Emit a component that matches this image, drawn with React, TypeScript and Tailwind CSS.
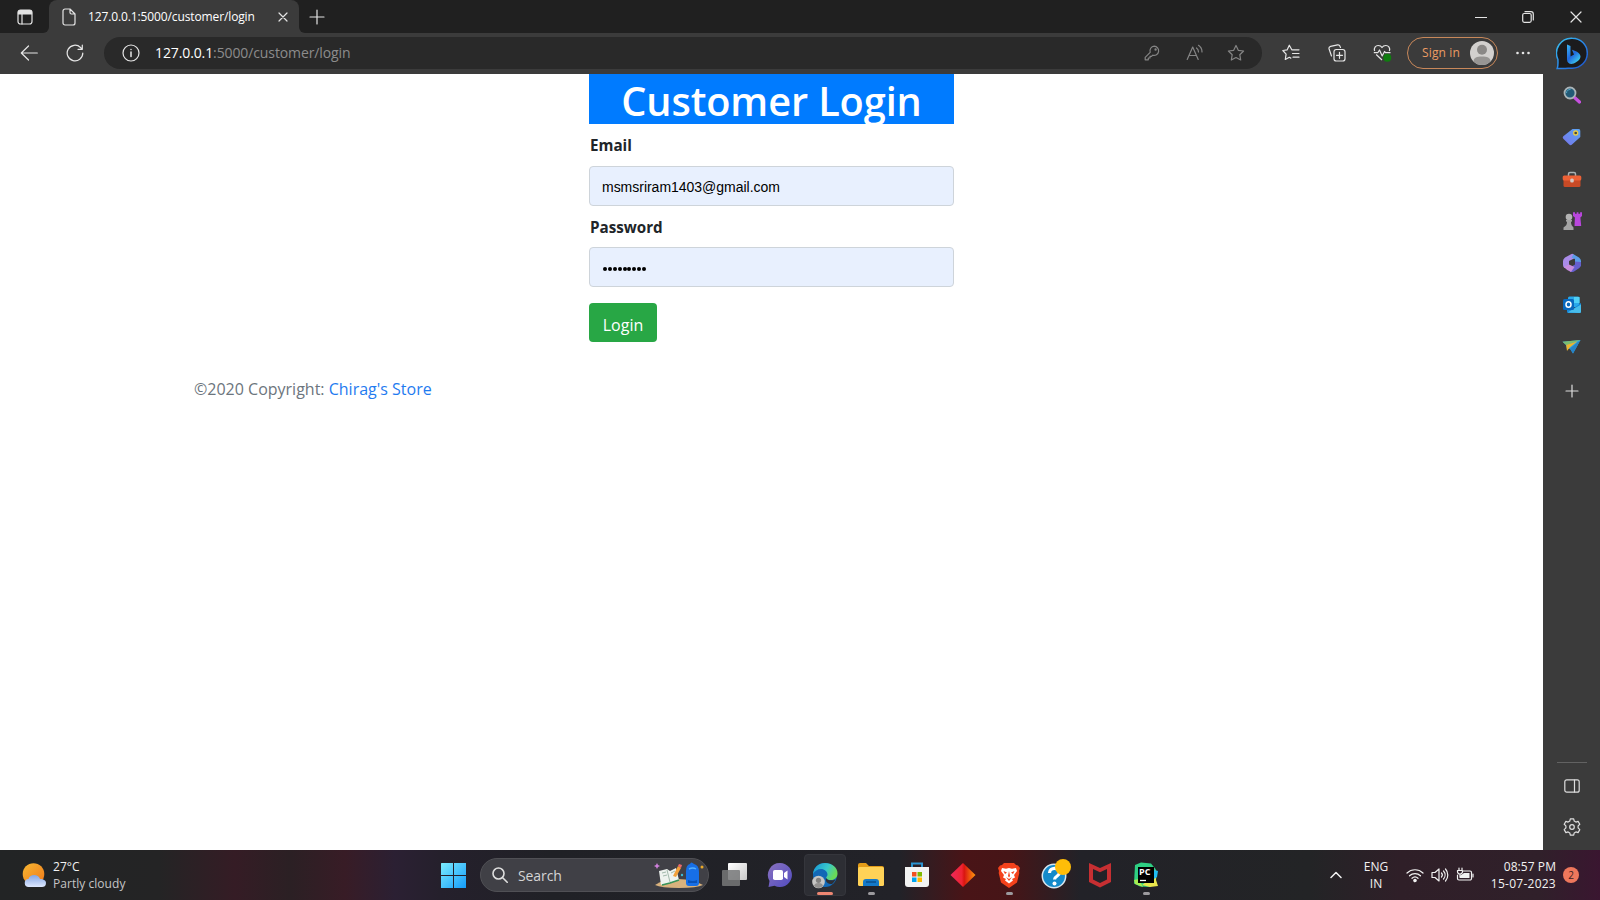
import type { ReactNode } from "react";

type IconProps = { w?: number; h?: number; box: string; className?: string; children: ReactNode };

function Icon({ w = 18, h = 18, box, className = "", children }: IconProps) {
  return (
    <svg width={w} height={h} viewBox={box} fill="none" stroke="currentColor" strokeWidth="1.2" strokeLinecap="round" strokeLinejoin="round" className={`block shrink-0 ${className}`}>
      {children}
    </svg>
  );
}

const STAR = "M9 1.5 11.3 6.3 16.6 7 12.8 10.7 13.7 16 9 13.5 4.3 16 5.2 10.7 1.4 7 6.7 6.3Z";

function TabStrip() {
  return (
    <div className="flex h-[33px] items-stretch bg-[#3b3b3b] text-[#e4e4e4]">
      <div className="flex w-[49px] items-center justify-center rounded-br-md bg-[#202020]">
        <Icon w={16} h={16} box="0 0 16 16">
          <rect x="1" y="1" width="14" height="14" rx="2.5" />
          <path d="M1.5 3.5a2 2 0 0 1 2-2h9a2 2 0 0 1 2 2V5h-13Z" fill="currentColor" />
          <path d="M5 5v10" />
        </Icon>
      </div>
      <div className="w-[250px] bg-[#202020]">
        <div className="flex h-full items-center rounded-t-lg bg-[#3b3b3b] pl-[13px] pr-[11px]">
          <Icon w={14} h={18} box="0 0 14 18">
            <path d="M1 3a2 2 0 0 1 2-2h5l5 5v9a2 2 0 0 1-2 2H3a2 2 0 0 1-2-2ZM8 1v3.500a1.500 1.500 0 0 0 1.500 1.500H13" />
          </Icon>
          <span className="ml-[12px] grow whitespace-nowrap text-[12px] leading-4 tracking-[-0.12px] text-white">127.0.0.1:5000/customer/login</span>
          <Icon w={10} h={10} box="0 0 10 10"><path d="M1 1l8 8M9 1 1 9" /></Icon>
        </div>
      </div>
      <div className="flex grow items-center rounded-bl-md bg-[#202020] pl-[10px] pr-[18px]">
        <Icon w={16} h={16} box="0 0 16 16"><path d="M8 1v14M1 8h14" /></Icon>
        <Icon w={12} h={12} box="0 0 12 12" className="ml-auto mr-[35px]"><path d="M.5 6.500h11" /></Icon>
        <Icon w={12} h={12} box="0 0 12 12" className="mr-[36px]">
          <rect x=".7" y="2.500" width="8.500" height="8.800" rx="1.500" />
          <path d="M3 .7h6a2.300 2.300 0 0 1 2.300 2.300v6" />
        </Icon>
        <Icon w={12} h={12} box="0 0 12 12"><path d="m1 1 10 10M11 1 1 11" /></Icon>
      </div>
    </div>
  );
}

function Toolbar() {
  return (
    <div className="flex h-[41px] items-center bg-[#3b3b3b] pb-px text-[#e6e6e6]">
      <Icon w={18} h={18} box="0 0 18 18" className="ml-[20px]"><path d="M17.300 9H1.500M8.500 2 1.300 9l7.200 7" /></Icon>
      <Icon w={18} h={18} box="0 0 18 18" className="ml-[28px]">
        <path d="M16.800 9a7.800 7.800 0 1 1-2.300-5.500L16.300 5.300M16.300 1v4.300H12" />
      </Icon>
      <div className="ml-[20px] flex h-[32px] w-[1158px] items-center rounded-full bg-[#292929] pl-[18px] pr-[17px]">
        <Icon w={18} h={18} box="0 0 18 18">
          <circle cx="9" cy="9" r="8" /><path d="M9 8v4.500M9 5.400v.2" strokeWidth="1.500" />
        </Icon>
        <span className="ml-[15px] whitespace-nowrap text-[14px] leading-5 tracking-[-0.11px] text-[#8c8c8c]"><span className="text-white">127.0.0.1</span>:5000/customer/login</span>
        <div className="ml-auto flex items-center text-[#858585]">
          <Icon w={16} h={16} box="0 0 16 16">
            <path d="M10.200 1.200a4.600 4.600 0 1 1-1.500 9L7.500 11.400H6V13H4.300v1.800H1.200v-2.500l5-5a4.600 4.600 0 0 1 4-6.100Z" /><circle cx="11.600" cy="4.500" r=".6" />
          </Icon>
          <Icon w={18} h={18} box="0 0 18 18" className="ml-[26px]">
            <path d="M1.200 15.500 6.700 3l5.500 12.500M3 11.500h7.500M10.500 4a5 5 0 0 1 2 4M12.500 1.300A8 8 0 0 1 16 8" />
          </Icon>
          <Icon w={18} h={18} box="0 0 18 18" className="ml-[23px]"><path d={STAR} /></Icon>
        </div>
      </div>
      <Icon w={18} h={18} box="0 0 18 18" className="ml-[20px]">
        <path d="M11 5.800H9.800L7.300 1.200 5.200 5.800.8 6.500l3.300 3.700-.8 5.300 4-2.200M11 5.800h6M10.500 9.500H17M11 13.200h6M7.300 13.300l1.500.8" />
      </Icon>
      <Icon w={18} h={18} box="0 0 18 18" className="ml-[28px]">
        <path d="M3.500 12 1.100 5a2.200 2.200 0 0 1 1.500-2.700L9.500.9A2.200 2.200 0 0 1 12 2.300l.5 1.200" />
        <rect x="6" y="5.500" width="11" height="11.500" rx="2.300" /><path d="M11.500 8.300v6M8.500 11.300h6" />
      </Icon>
      <svg width="19" height="18" viewBox="0 0 19 18" fill="none" stroke="currentColor" strokeWidth="1.200" strokeLinejoin="round" className="ml-[27px] block shrink-0">
        <path d="M1.600 7C.6 4 2.600 1.500 5.200 1.500c2 0 3.300 1 3.800 2 .6-1 2-2 3.800-2 2.800 0 4.600 2.700 3.600 5.500M3.200 10.500 9 16M.8 8.700h4L6.500 6l2.700 6 2.300-4.500 1 1.200h5" />
        <circle cx="14.300" cy="13.700" r="4" fill="#107c10" stroke="none" />
      </svg>
      <div className="ml-[15px] flex h-[32px] w-[91px] items-center justify-between rounded-full border-[1.500px] border-[#c8885a] pl-[14px] pr-[3px]">
        <span className="whitespace-nowrap text-[12px] leading-4 tracking-[0.15px] text-[#eb9c63]">Sign in</span>
        <svg width="24" height="24" viewBox="0 0 24 24" className="shrink-0">
          <circle cx="12" cy="12" r="12" fill="#d2d0ce" /><circle cx="12" cy="8.700" r="5" fill="#8a8886" />
          <path d="M3.500 20.400C3.500 16.500 7 15.500 12 15.500s8.500 1 8.500 4.900A12 12 0 0 1 3.500 20.400Z" fill="#979593" />
        </svg>
      </div>
      <Icon w={16} h={4} box="0 0 16 4" className="ml-[17px]">
        <g fill="currentColor" stroke="none"><circle cx="2.500" cy="2" r="1.300" /><circle cx="8" cy="2" r="1.300" /><circle cx="13.500" cy="2" r="1.300" /></g>
      </Icon>
      <svg width="32" height="33" viewBox="0 0 32 33" className="ml-[25px] block shrink-0">
        <defs>
          <linearGradient id="ring" x1="0" y1="0" x2="1" y2="1"><stop stopColor="#3bc4ee" /><stop offset=".55" stopColor="#2883e8" /><stop offset="1" stopColor="#1d4fc4" /></linearGradient>
          <linearGradient id="bing" x1="0" y1="0" x2=".7" y2="1"><stop stopColor="#39b9f5" /><stop offset=".55" stopColor="#2167df" /><stop offset="1" stopColor="#3fd0ee" /></linearGradient>
        </defs>
        <path d="M16.300 1.200a15 15 0 1 1 0 30c-3 0-5 .3-7 .3H1.200c1-2 .9-5 .7-9A15 15 0 0 1 16.300 1.200Z" fill="#1b1b1d" stroke="url(#ring)" strokeWidth="1.500" />
        <path d="M11 7.500 14.500 9v10.500L18 17.400l-2-4.600c3 1 8.500 3 8.500 6.700 0 4.200-7 7.500-9 7.500-2.500 0-4.500-1.700-4.500-4.500Z" fill="url(#bing)" />
      </svg>
    </div>
  );
}

function LoginPage() {
  return (
    <main className="grow bg-white">
      <form className="ml-[589px] w-[365px]" onSubmit={(e) => e.preventDefault()}>
        <h1 className="flex h-[50px] items-center justify-center whitespace-nowrap bg-[#007bff] pt-[3px] text-[39.700px] font-semibold leading-[48px] tracking-[-0.1px] text-white">Customer Login</h1>
        <label className="mt-[9px] block h-[25px] pl-px text-[15.200px] font-bold leading-[24px] text-[#212529]">Email</label>
        <div className="mt-[8px] flex h-[40px] items-center rounded border border-[#ced4da] bg-[#e8f0fe] pl-[12px] pt-[3px] font-['Liberation_Sans',sans-serif] text-[14px] tracking-[-0.02px] text-black">msmsriram1403@gmail.com</div>
        <label className="mt-[9px] block h-[25px] pl-px text-[15.200px] font-bold leading-[24px] text-[#212529]">Password</label>
        <div className="mt-[7px] flex h-[40px] items-center gap-[0.900px] rounded border border-[#ced4da] bg-[#e8f0fe] pl-[13px] pt-[3px]">
          {Array.from({ length: 9 }, (_, i) => (
            <span key={i} className="size-[4px] rounded-full bg-black" />
          ))}
        </div>
        <button type="submit" className="mt-[16px] flex h-[39px] w-[68px] items-center justify-center rounded bg-[#28a745] pt-[4px] text-[16px] text-white">Login</button>
      </form>
      <footer className="mt-[35px] whitespace-nowrap pl-[194px] text-[16px] leading-[24px] text-[#6c757d]">©2020 Copyright: <a href="#store" className="text-[#1f7bf0]">Chirag's Store</a></footer>
    </main>
  );
}

function Sidebar() {
  const cell = "flex h-[42px] items-center justify-center";
  return (
    <aside className="flex w-[57px] shrink-0 flex-col bg-[#3b3b3b] text-[#dedede]">
      <div className={cell}>
        <svg width="18" height="18" viewBox="0 0 18 18"><path d="m11.500 11.500 5 4.500" stroke="#c650df" strokeWidth="3.300" strokeLinecap="round" /><circle cx="7" cy="7" r="5.500" fill="#225a77" stroke="#aab4b8" strokeWidth="1.800" /><path d="M3.500 7a3.500 3.500 0 0 1 4-3.500" fill="none" stroke="#55a6c4" /></svg>
      </div>
      <div className={cell}>
        <svg width="19" height="18" viewBox="0 0 19 18"><defs><linearGradient id="tag" x1="1" y1="0" x2="0" y2="1"><stop stopColor="#5aa6f5" /><stop offset="1" stopColor="#7774ea" /></linearGradient></defs><path d="M10.500 1h6A1.800 1.800 0 0 1 18.300 3v6L10 16.500a2 2 0 0 1-2.800 0L1.300 10.800a1.800 1.800 0 0 1 0-2.500Z" fill="url(#tag)" /><circle cx="13.700" cy="5" r="2" fill="#454745" stroke="#e8cd43" strokeWidth="1.300" /></svg>
      </div>
      <div className={cell}>
        <svg width="20" height="17" viewBox="0 0 20 17"><path d="M6.500 5V3q0-1.500 1.500-1.500h4q1.500 0 1.500 1.500v2" stroke="#a8b1b3" strokeWidth="1.500" fill="none" /><rect x="1.500" y="8" width="17" height="8" rx="1.500" fill="#c84a26" /><rect x=".7" y="4.500" width="18.600" height="5" rx="1.500" fill="#ed6136" /><rect x="8.200" y="7.500" width="3.600" height="4" rx="1.500" fill="#d3c9c5" /></svg>
      </div>
      <div className={cell}>
        <svg width="20" height="20" viewBox="0 0 20 20"><path d="M11 1.200h2v1.500h1.700V1.200h1.700v1.500h1.700V1.200H20V5l-1.600 1.500.8 8.500H12.500l.4-8.500L11 5Z" fill="#b846dc" /><circle cx="7" cy="6" r="3.300" fill="#b3b3b3" /><path d="M4 9h6v1.300L9 11c0 2.500 1 4 2.500 5.500V19H1.500v-2.500C4 15 5 13.500 5 11L4 10.300Z" fill="#a3a3a3" /></svg>
      </div>
      <div className={cell}>
        <svg width="20" height="20" viewBox="0 0 20 20"><path d="M9.500 1 3 4.500Q1 6 1 8v4q0 2 1.500 3L7 12.500V8L14 4.500 11.500 1.300Q10.500.5 9.500 1Z" fill="#a98be8" /><path d="m11.500 1.200 5.500 3.300Q19 6 19 8v5L13 9.500V6L9.500 4.500Z" fill="#5b9de8" /><path d="M19 9v3q0 2-2 3.300L12 18.500q-2 1-4 0L7 15l6-3.500V8.500Z" fill="#655fce" /><path d="M1.800 14 7 11.500l5.500 2.500L9 19Q5 17.500 1.800 14Z" fill="#c68bdd" /></svg>
      </div>
      <div className={cell}>
        <svg width="20" height="20" viewBox="0 0 20 20"><path d="M6 3q0-1.500 1.500-1.500H16q1.500 0 1.500 1.500v9H6Z" fill="#28a8ea" /><path d="M12 2h5.500v6H12Z" fill="#50d0f5" /><path d="m5 10 7 3 7-5v8.500q0 1.500-1.500 1.500H6.500Q5 18 5 16.500Z" fill="#1387d9" /><path d="m5.500 17.500 13.500-8v7q0 1.500-1.500 1.500Z" fill="#48bdea" /><rect x="1" y="4" width="11" height="11" rx="1.500" fill="#0968bd" /><ellipse cx="6.500" cy="9.500" rx="2.500" ry="2.800" fill="none" stroke="white" strokeWidth="1.500" /></svg>
      </div>
      <div className="flex h-[41px] items-center justify-center">
        <svg width="19" height="15" viewBox="0 0 19 15"><path d="M.5 2.800 18.500 1 11 14.500 8 9.800 5 10 4 6Z" fill="#35a5dd" /><path d="M8 9.500 18.500 1 11 14.500Z" fill="#2583c8" /><path d="M.5 2.800 18.500 1 4.500 6.300Z" fill="#7cbd70" /><path d="m4.200 6 11-3.500-7.500 6L5 12Z" fill="#efb52e" /></svg>
      </div>
      <div className="flex h-[48px] items-center justify-center">
        <Icon w={14} h={14} box="0 0 14 14"><path d="M7 1v12M1 7h12" /></Icon>
      </div>
      <div className="mx-auto mt-auto h-px w-[30px] bg-[#626262]" />
      <div className="flex h-[44px] items-center justify-center pt-[2px]">
        <Icon w={16} h={14} box="0 0 16 14"><rect x=".8" y=".8" width="14.400" height="12.400" rx="2" /><path d="M10.500 1v12" /></Icon>
      </div>
      <div className="flex h-[43px] items-center justify-center pb-[4px]">
        <Icon w={18} h={18} box="0 0 18 18"><path d="m7.300.9-.5 2.200-1.700 1-2.200-.7L1.200 6.300l1.700 1.600v2L1.200 11.600l1.700 3 2.200-.7 1.700 1 .5 2.200h3.400l.5-2.200 1.700-1 2.200.7 1.700-3-1.700-1.700v-2l1.700-1.600-1.700-2.900-2.200.7-1.700-1-.5-2.200Z" /><circle cx="9" cy="9" r="2.300" /></Icon>
      </div>
    </aside>
  );
}

function Slot({ children, state = "idle" }: { children: ReactNode; state?: "idle" | "open" | "active" }) {
  return (
    <div className="flex w-[45.800px] items-center justify-center">
      <div className={`relative flex h-[42px] w-[42px] items-center justify-center rounded ${state === "active" ? "border border-[#35363c] bg-[#2d2e34]" : ""}`}>
        {children}
        {state === "open" && <i className="absolute bottom-[1px] left-[18px] h-[3px] w-[7px] rounded-full bg-[#9c9a9e]" />}
        {state === "active" && <i className="absolute bottom-0 left-[12px] h-[3px] w-[16px] rounded-full bg-[#ed8672]" />}
      </div>
    </div>
  );
}

function PinnedApps() {
  return (
    <div className="ml-[2px] flex items-center">
      <Slot><svg width="26" height="26" viewBox="0 0 26 26"><defs><linearGradient id="sq" x1="0" y1="0" x2="1" y2="1"><stop stopColor="white" /><stop offset="1" stopColor="#c8c8c8" /></linearGradient></defs><rect x="7" y="1" width="19" height="17" rx="1" fill="url(#sq)" /><rect x="1" y="8" width="18" height="16" rx="1" fill="#777879" fillOpacity=".85" /></svg></Slot>
      <Slot><svg width="26" height="26" viewBox="0 0 26 26"><defs><linearGradient id="chat" x1="0" y1="0" x2="1" y2="1"><stop stopColor="#8a72bf" /><stop offset="1" stopColor="#514cc0" /></linearGradient></defs><path d="M13 1a12 12 0 1 1-5.500 22.700L1.500 25l1-6A12 12 0 0 1 13 1Z" fill="url(#chat)" /><rect x="6" y="8" width="10" height="10" rx="1.800" fill="white" /><path d="m17 11 3.500-2.500v9L17 15Z" fill="white" /></svg></Slot>
      <Slot state="active"><svg width="28" height="28" viewBox="0 0 28 28"><defs><linearGradient id="edge" x1="0" y1="0" x2="1" y2=".4"><stop stopColor="#1493d6" /><stop offset=".6" stopColor="#39c8cb" /><stop offset="1" stopColor="#69da58" /></linearGradient></defs><circle cx="14" cy="14" r="12" fill="#1268b6" /><path d="M2 13C2.500 6.500 7.500 2 14 2c7 0 12.500 4.600 12.500 10.500 0 4-3 6.500-6.500 6.500-2.500 0-4.800-.8-4.800-2.300 0-1 1.300-1.200 1.300-3.200 0-3-3-5.500-6.500-5.500C6.500 8 3.500 10 2 13Z" fill="url(#edge)" /><path d="M15 17c1.500 2.500 5 3 9.500 1.500-1 2-2 3.200-3.500 4.500-4 0-7-2-6-6Z" fill="#2d2e34" /><circle cx="7.500" cy="21" r="6.300" fill="#c6c5c4" /><circle cx="7.500" cy="19.300" r="2.600" fill="#81807f" /><path d="M3 25q.5-3 4.500-3t4.500 3a6 6 0 0 1-9 0Z" fill="#92908f" /></svg></Slot>
      <Slot state="open"><svg width="28" height="26" viewBox="0 0 28 26"><path d="M1 3q0-2 2-2h6l3 3h13q2 0 2 2v3H1Z" fill="#e39c18" /><rect x="1" y="5" width="26" height="19" rx="1.500" fill="#ffd257" /><path d="M6 24v-4q0-3 3-3h10q3 0 3 3v4Z" fill="#1479c8" /><path d="M9 20h10" stroke="#084f8e" strokeWidth="1.500" /></svg></Slot>
      <Slot><svg width="26" height="26" viewBox="0 0 26 26"><path d="M8 6V1.500h10V6" fill="none" stroke="#2b94d1" strokeWidth="2" /><path d="M1 5h24v17q0 3-3 3H4q-3 0-3-3Z" fill="#f3f3f3" /><path d="M8 10h4.500v4.500H8Z" fill="#f25022" /><path d="M13.500 10H18v4.500h-4.500Z" fill="#7fba00" /><path d="M8 15.500h4.500V20H8Z" fill="#00a4ef" /><path d="M13.500 15.500H18V20h-4.500Z" fill="#ffb900" /></svg></Slot>
      <Slot><svg width="26" height="26" viewBox="0 0 26 26"><defs><linearGradient id="dia"><stop stopColor="#ef295b" /><stop offset=".45" stopColor="#ee2433" /><stop offset=".55" stopColor="#d91511" /><stop offset="1" stopColor="#ff980b" /></linearGradient></defs><path d="m13 1 12.500 12L13 25 .5 13Z" fill="url(#dia)" /></svg></Slot>
      <Slot state="open"><svg width="24" height="26" viewBox="0 0 24 26"><path d="m7 1-2 2-2 .5L1 6l1 3-.3 2L4 20.500 12 26l8-5.500L22.300 11 22 9l1-3-2-2.500L19 3l-2-2Z" fill="#f4421c" /><path d="m5 6 4 .7L12 6l3 .7 4-.7 1 3-3 4 1 2.500-3 1.500 1 1.500-4 3-4-3 1-1.500-3-1.500L7 13 4 9Z" fill="white" /><path d="m6.500 9 3.500 1.500L8 12Zm11 0L14 10.500l2 1.500ZM12 9l1 5-1 1.500-1-1.500Zm-3 6 3 2 3-2-3 4Z" fill="#f4421c" /></svg></Slot>
      <Slot><svg width="34" height="32" viewBox="0 0 34 32"><circle cx="17" cy="17" r="11.700" fill="#148aca" stroke="#d9e7ef" strokeWidth="1.500" /><path d="M12.500 14c0-6 10-6 10-.5 0 4-5 3.500-5 7" stroke="white" strokeWidth="3.200" fill="none" /><circle cx="17.500" cy="24.500" r="2" fill="white" /><circle cx="26" cy="8" r="8" fill="#ffbd08" /></svg></Slot>
      <Slot><svg width="24" height="26" viewBox="0 0 24 26"><path d="m1 1 11 5 11-5v19l-11 5.500L1 20Zm4 6v10.500l7 3.500 7-3.500V7l-7 3.300Z" fill="#c62f32" /></svg></Slot>
      <Slot state="open"><svg width="28" height="28" viewBox="0 0 28 28"><path d="M3 4 9 1.500l10 1 5 6-1 13-5 4.500-10-.5-6-3Z" fill="#2ed083" /><path d="m18 8 7 2-1 9 2 6-8 1-8-2 7-5Z" fill="#e9e64d" /><path d="m22 9 4 1-1 6-3 2Z" fill="#21bdf0" /><path d="m2 19 5-1 4 8-8-3Z" fill="#a6eb50" /><rect x="6" y="6" width="16" height="16" fill="black" /><path d="M8 19.500h6" stroke="white" strokeWidth="1.300" /><text x="7" y="14" fill="white" fontSize="9" fontWeight="700" fontFamily="Open Sans, sans-serif">PC</text></svg></Slot>
    </div>
  );
}

function Taskbar() {
  return (
    <div className="flex h-[50px] items-center bg-[linear-gradient(90deg,#222425_0px,#242425_160px,#351c25_235px,#2b2024_290px,#381c26_345px,#2b2033_395px,#25202c_440px,#202126_550px,#222228_900px,#491417_965px,#461517_1010px,#222228_1080px,#232426_1310px,#2f1f28_1400px,#30202a_1540px,#3a1630_1600px)] text-[#f2f2f2]">
      <div className="flex w-[441px] items-center pl-[22px]">
        <svg width="25" height="26" viewBox="0 0 25 26" className="shrink-0"><defs><linearGradient id="sun" x1="0" y1="0" x2="1" y2="1"><stop stopColor="#f7b832" /><stop offset="1" stopColor="#f0781a" /></linearGradient><linearGradient id="cloud" x1="0" y1="0" x2="0" y2="1"><stop stopColor="#83a5e4" /><stop offset="1" stopColor="#dfe9ff" /></linearGradient></defs><circle cx="11.500" cy="12" r="10.800" fill="url(#sun)" /><path d="M7 25a4 4 0 0 1-.5-8c1-5 10-5.500 11.500 0 3 0 6 1 6 4s-2 4-4 4Z" fill="url(#cloud)" /></svg>
        <div className="ml-[6px] flex flex-col whitespace-nowrap text-[12px] leading-[17px] tracking-[0.04px]">
          <span>27°C</span>
          <span className="text-[#c5c4c5]">Partly cloudy</span>
        </div>
      </div>
      <svg width="25" height="25" viewBox="0 0 25 25" className="shrink-0"><defs><linearGradient id="win" x1="0" y1="0" x2="25" y2="25" gradientUnits="userSpaceOnUse"><stop stopColor="#7cecff" /><stop offset="1" stopColor="#149cfa" /></linearGradient></defs><path d="M.5 0H12v12H0V.5ZM13 0h12v12H13ZM0 13h12v12H0ZM13 13h12v12H13Z" fill="url(#win)" /></svg>
      <div className="ml-[14px] flex h-[34px] w-[229px] shrink-0 items-center rounded-full border border-[#505055] bg-[#404046] pl-[11px] pr-[4px]">
        <Icon w={16} h={16} box="0 0 16 16" className="text-[#dedede]"><circle cx="6.500" cy="6.500" r="5.500" strokeWidth="1.600" /><path d="m10.700 10.700 4.500 4.500" strokeWidth="1.600" /></Icon>
        <span className="ml-[10px] grow text-[14px] tracking-[-0.1px] text-[#d4d4d5]">Search</span>
        <svg width="50" height="26" viewBox="0 0 50 26" className="shrink-0"><path d="M1 23q8-6 23-6t25 6q-6 3-24 3T1 23Z" fill="#d9b27d" /><path d="m5 9 8-2 3 2 6-3 3 12-7 2-3 1-8 2Z" fill="#eef3ef" /><path d="m8 23 8-2 9-3" stroke="#38945a" strokeWidth="1.600" fill="none" /><path d="m13 8 3 12M8 11l4-1M9 14l4-1M17 11l4-2" stroke="#a2b9ac" /><path d="m19 14 5-10 3 2-5 9Z" fill="#f2a03a" /><path d="m24 4 1-2 3 1-1 3Z" fill="#ee696b" /><path d="M32 21V9q0-6 4-7 1-3 4 0 5 1 5 8v11q0 3-3 3h-7q-3 0-3-3Z" fill="#176fe7" /><path d="M34 18q5 2 9 0v3h-9Z" fill="#0952b9" /><path d="M35 7q4-2 7 0" stroke="#53b1ff" strokeWidth="1.500" fill="none" /><path d="m3 1 1 2 2 1-2 1-1 2-1-2-2-1 2-1Z" fill="#cf80dc" /><circle cx="48" cy="5" r="1.500" fill="#ecaa27" /><circle cx="28" cy="13" r="1.200" fill="#3cbad6" /></svg>
      </div>
      <PinnedApps />
      <div className="ml-auto flex shrink-0 items-center pr-[21px] text-[12px] leading-[17px]">
        <Icon w={12} h={8} box="0 0 12 8"><path d="m1 6.500 5-5 5 5" strokeWidth="1.500" /></Icon>
        <div className="ml-[20px] w-[28px] text-center">ENG<br />IN</div>
        <Icon w={18} h={16} box="0 0 18 16" className="ml-[16px]"><path d="M1 6a11.500 11.500 0 0 1 16 0M3.500 8.800a8 8 0 0 1 11 0M6 11.300a4.500 4.500 0 0 1 6 0" /><circle cx="9" cy="13.500" r="1.200" fill="currentColor" /></Icon>
        <Icon w={18} h={16} box="0 0 18 16" className="ml-[7px]"><path d="M1 5.500h3L8 2v12L4 10.500H1ZM10.500 6a3 3 0 0 1 0 4M12.500 4a6 6 0 0 1 0 8M14.500 2a9 9 0 0 1 0 12" /></Icon>
        <Icon w={18} h={16} box="0 0 18 16" className="ml-[7px]"><path d="M7 4h7a1.500 1.500 0 0 1 1.500 1.500v6A1.500 1.500 0 0 1 14 13H3a1.500 1.500 0 0 1-1.500-1.500V8" /><path d="M8 6h5.500v5h-10V9Z" fill="currentColor" stroke="none" /><path d="M17 7v3M3 1v2M6 1v2M1.500 3.500h5v1a2.500 2.500 0 0 1-5 0ZM4 7v2" /></Icon>
        <div className="ml-[14px] w-[68px] whitespace-nowrap text-right"><span className="tracking-[0.06px]">08:57 PM</span><br /><span className="tracking-[0.26px]">15-07-2023</span></div>
        <span className="ml-[7px] flex size-[16px] items-center justify-center rounded-full bg-[#ee775c] text-[10px] leading-none text-[#3c2020]">2</span>
      </div>
    </div>
  );
}

export default function App() {
  return (
    <div className="flex h-[900px] w-[1600px] flex-col overflow-hidden bg-[#3b3b3b] font-['Open_Sans','Noto_Sans',sans-serif]">
      <TabStrip />
      <Toolbar />
      <div className="flex min-h-0 grow">
        <LoginPage />
        <Sidebar />
      </div>
      <Taskbar />
    </div>
  );
}
